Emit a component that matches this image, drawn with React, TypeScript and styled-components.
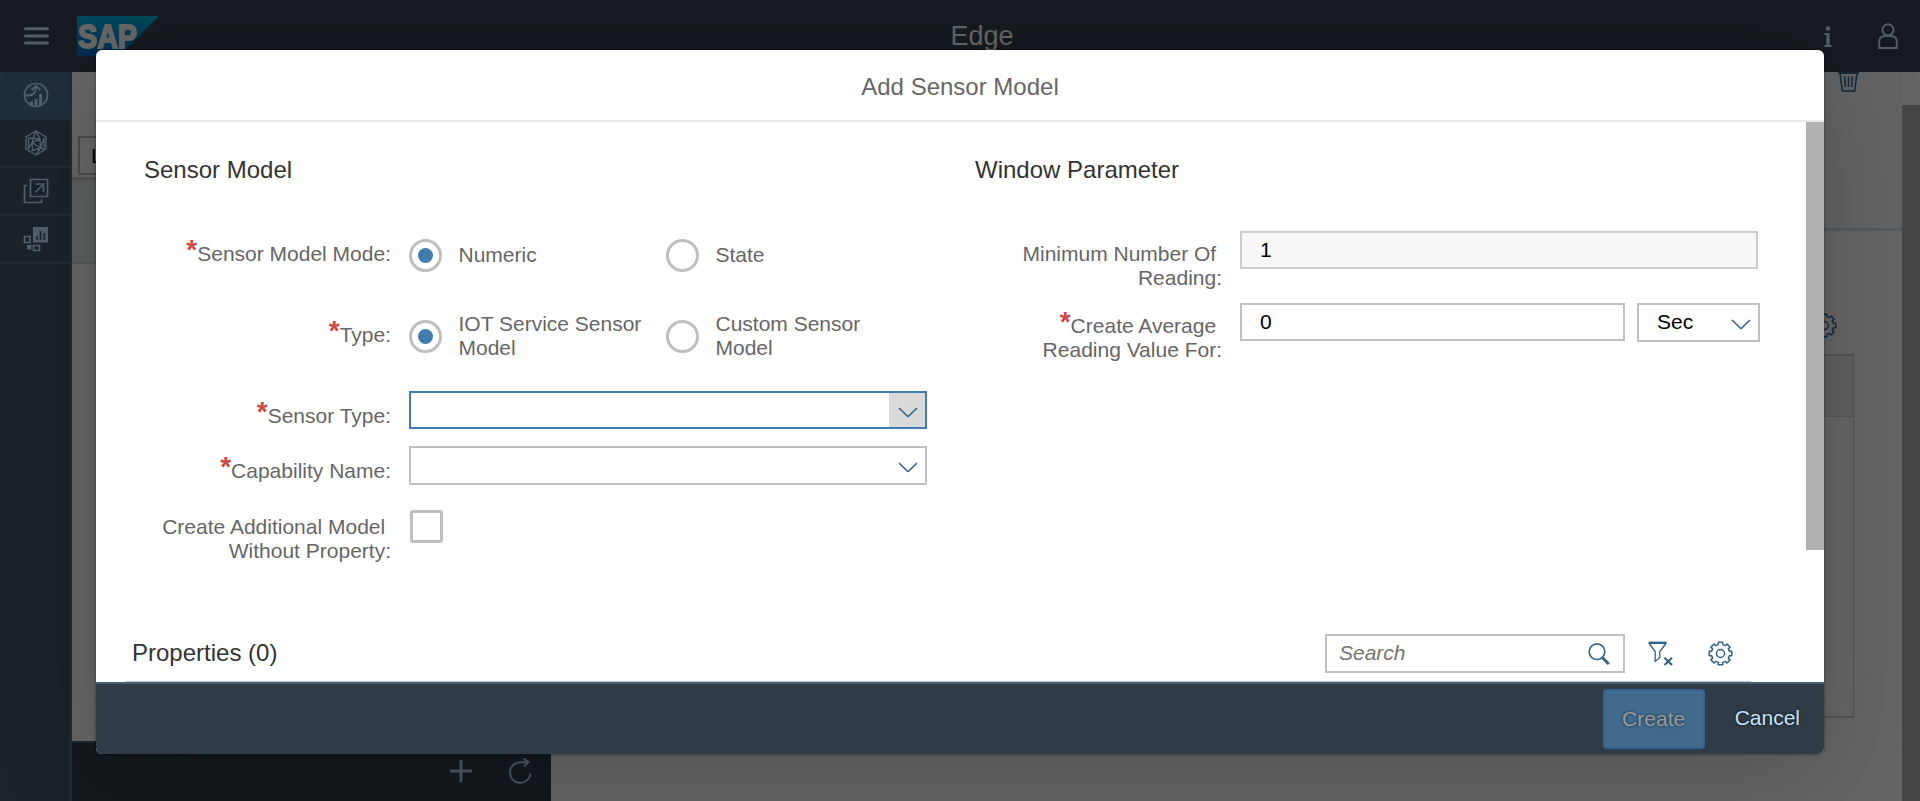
import React from 'react';
import styled, { createGlobalStyle, css } from 'styled-components';

const Global = createGlobalStyle`
  * { box-sizing: border-box; }
  html, body { margin: 0; overflow: hidden; }
  body { font-family: "Liberation Sans", Arial, Helvetica, sans-serif; font-size: 21px; line-height: 24px; color: #666; }
`;

const Page = styled.div`
  position: relative;
  display: flex;
  flex-direction: column;
  width: 1920px;
  height: 801px;
  overflow: hidden;
  background: #666;
`;
const Shell = styled.header`
  display: flex;
  align-items: center;
  height: 72px;
  flex: none;
  padding: 0 22px 0 24px;
  background: #151b20;
`;
const ShellTitle = styled.div`
  flex: 1;
  padding: 0 14px 1px 0;
  font-size: 27px;
  line-height: 32px;
  text-align: center;
  color: #666;
`;
const ShellStart = styled.div`
  display: flex;
  align-items: center;
  width: 176px;
  svg { flex: none; }
`;
const ShellEnd = styled.div`
  display: flex;
  align-items: center;
  justify-content: flex-end;
  gap: 46px;
  width: 120px;
`;
const Body = styled.div`
  display: flex;
  flex: 1;
  min-height: 0;
`;
const Nav = styled.nav`
  width: 72px;
  background: #1b232b;
  border-right: 2px solid #222c36;
`;
const NavItem = styled.div<{ $active?: boolean }>`
  display: flex;
  align-items: center;
  justify-content: center;
  height: 48px;
  margin-right: ${p => (p.$active ? '-1px' : '0')};
  padding-left: 1px;
  border-bottom: 2px solid #232d37;
  background: ${p => (p.$active ? '#212f3b' : 'transparent')};
`;
const Master = styled.aside`
  display: flex;
  flex-direction: column;
  width: 479px;
`;
const MasterTop = styled.div`
  height: 108px;
  padding: 64px 0 0 6px;
  border-bottom: 3px solid #535353;
`;
const MasterSearch = styled.div`
  width: 460px;
  height: 39px;
  padding: 6px 11px;
  border: 2px solid #4a4a4a;
  color: #000;
`;
const MasterRow = styled.div`
  height: 84px;
  background: #5c6061;
  border-bottom: 2px solid #585858;
`;
const MasterFill = styled.div`
  flex: 1;
`;
const MasterFooter = styled.div`
  display: flex;
  align-items: center;
  justify-content: flex-end;
  gap: 37px;
  height: 60px;
  padding: 0 19px 3px 0;
  background: #14191e;
  border-top: 2px solid #1f272f;
`;
const Detail = styled.main`
  flex: 1;
`;
const DetailHeader = styled.div`
  display: flex;
  justify-content: flex-end;
  height: 159px;
  padding-right: 43px;
  background: #636466;
  border-bottom: 3px solid #535b65;
`;
const DetailTools = styled.div`
  display: flex;
  align-items: flex-end;
  justify-content: flex-end;
  height: 123px;
  padding: 0 65px 16px 0;
`;
const DetailTable = styled.div`
  height: 364px;
  margin: 0 48px 0 40px;
  border: 2px solid #545454;
  border-right-width: 1px;
`;
const DetailTableHead = styled.div`
  height: 61px;
  background: #616161;
  border-bottom: 1px solid #585858;
`;
const PageScroll = styled.div`
  width: 18px;
  padding-top: 33px;
`;
const PageThumb = styled.div`
  height: 100%;
  background: #474747;
`;

const Dialog = styled.section`
  position: absolute;
  left: 96px;
  top: 50px;
  display: flex;
  flex-direction: column;
  width: 1728px;
  height: 704px;
  border-radius: 6px;
  overflow: hidden;
  background: #fff;
`;
const DialogShadow = styled.div`
  position: absolute;
  left: 96px;
  top: 50px;
  width: 1728px;
  height: 704px;
  border-radius: 6px;
  box-shadow: 0 0 3px rgba(0,0,0,.5), 0 22px 110px rgba(0,0,0,.2);
`;
const DialogHeader = styled.div`
  height: 72px;
  flex: none;
  padding: 23px 0 0;
  border-bottom: 2px solid #e8e8e8;
  font-size: 24px;
  line-height: 27px;
  text-align: center;
`;
const DialogBody = styled.div`
  display: flex;
  height: 560px;
`;
const Scrollable = styled.div`
  flex: 1;
  display: flex;
  flex-direction: column;
`;
const ScrollThumb = styled.div`
  width: 18px;
  height: 428px;
  background: #b1b1b1;
`;
const Form = styled.div`
  display: flex;
  height: 498px;
`;
const Column = styled.div<{ $w: number }>`
  width: ${p => p.$w}px;
  padding-left: 48px;
`;
const SectionTitle = styled.h2`
  height: 109px;
  margin: 0;
  padding-top: 34px;
  font-size: 24px;
  font-weight: 400;
  line-height: 28px;
  color: #333;
`;
const Row = styled.div<{ $h: number }>`
  display: flex;
  height: ${p => p.$h}px;
`;
const Label = styled.div<{ $top: number }>`
  width: 248px;
  flex: none;
  padding: ${p => p.$top}px 1px 0 0;
  text-align: right;
`;
const Star = styled.span`
  position: relative;
  top: -2px;
  font-size: 28px;
  font-weight: 700;
  line-height: 0;
  color: #c94b4b;
`;
const fieldBox = css`
  display: flex;
  flex: none;
  border: 2px solid #bfbfbf;
`;
const Field = styled.div<{ $w: number; $h?: number; $focus?: boolean; $readonly?: boolean }>`
  ${fieldBox}
  width: ${p => p.$w}px;
  height: ${p => p.$h || 38}px;
  margin-left: 17px;
  border-color: ${p => (p.$focus ? '#427cac' : p.$readonly ? '#ccc' : '#bfbfbf')};
  background: ${p => (p.$readonly ? '#f7f7f7' : '#fff')};
  padding-left: 18px;
  line-height: 34px;
  color: #000;
  justify-content: space-between;
`;
const UnitSelect = styled.div`
  ${fieldBox}
  width: 123px;
  height: 39px;
  margin-left: 12px;
  padding-left: 18px;
  justify-content: space-between;
  line-height: 34px;
  color: #000;
`;
const Arrow = styled.div<{ $pressed?: boolean }>`
  display: flex;
  align-items: center;
  justify-content: center;
  width: 36px;
  padding: 4px 0 0 2px;
  background: ${p => (p.$pressed ? '#d9d9d9' : 'transparent')};
`;
const RadioWrap = styled.div`
  display: flex;
  align-items: center;
  height: 48px;
  width: 240px;
  margin-left: 17px;
`;
const RadioDot = styled.div<{ $on?: boolean }>`
  display: flex;
  align-items: center;
  justify-content: center;
  flex: none;
  width: 33px;
  height: 33px;
  margin: 1px 16.5px 0 0;
  border: 3px solid #bfbfbf;
  border-radius: 50%;
  &::after {
    content: '';
    width: 15px;
    height: 15px;
    border-radius: 50%;
    background: ${p => (p.$on ? '#427cac' : 'transparent')};
  }
`;
const Check = styled.div`
  width: 33px;
  height: 33px;
  margin: -2px 0 0 18px;
  border: 3px solid #bfbfbf;
  border-radius: 3px;
`;
const TableBar = styled.div`
  display: flex;
  align-items: center;
  height: 62px;
  margin: 0 55px 0 30px;
  padding: 0 18px 0 6px;
  border-bottom: 1px solid #c2c6ca;
`;
const TableTitle = styled.div`
  flex: 1;
  padding-top: 4px;
  font-size: 24px;
  line-height: 28px;
  color: #333;
`;
const SearchBox = styled.div`
  ${fieldBox}
  align-items: center;
  justify-content: space-between;
  width: 300px;
  height: 39px;
  margin: 6px 23px 0 0;
  padding: 0 13px 2px 12px;
  font-style: italic;
  color: #757575;
  svg { margin-top: 3px; }
`;
const BarIcon = styled.div<{ $gap?: number }>`
  display: flex;
  padding-top: 5px;
  margin-left: ${p => p.$gap || 0}px;
`;
const DialogFooter = styled.div`
  display: flex;
  justify-content: flex-end;
  height: 72px;
  padding: 5px 24px 0 0;
  border-top: 2px solid #475e75;
  background: #2f3c48;
  text-shadow: 0 0 3px #111;
`;
const CreateButton = styled.div`
  width: 102px;
  height: 60px;
  padding-top: 16px;
  border: 2px solid #376390;
  border-radius: 4px;
  background: #416a8d;
  text-align: center;
  color: #979b9e;
  text-shadow: 0 0 3px rgba(0,0,0,.6);
`;
const CancelButton = styled.div`
  padding: 17px 0 0 30px;
  color: #c9e2fa;
`;

const Chevron = () => (
  <svg width="20" height="11" viewBox="0 0 20 11" fill="none" stroke="#346187" strokeWidth="1.6">
    <path d="M1 1 L9.2 9 Q10 9.7 10.8 9 L19 1" />
  </svg>
);

const Gear = ({ color }: { color: string }) => {
  const pts: string[] = [];
  for (let i = 0; i < 8; i++) {
    const a = (i * Math.PI) / 4;
    [[-0.25, 9.1], [-0.2, 11.5], [0.2, 11.5], [0.25, 9.1]].forEach(([d, r]) => {
      pts.push(`${(12.5 + r * Math.sin(a + d)).toFixed(2)} ${(12.5 - r * Math.cos(a + d)).toFixed(2)}`);
    });
  }
  return (
    <svg width="25" height="25" viewBox="0 0 25 25" fill="none" stroke={color} strokeWidth="1.5" strokeLinejoin="round">
      <path d={`M${pts.join(' L')} Z`} />
      <circle cx="12.5" cy="12.5" r="4" />
    </svg>
  );
};

const Menu = () => (
  <svg width="25" height="18" viewBox="0 0 25 18" stroke="#535d66" strokeWidth="3" strokeLinecap="round">
    <path d="M1.5 1.8H23.5M1.5 9H23.5M1.5 16H23.5" />
  </svg>
);

const SapText = styled.text`
  font: 700 34px "Liberation Sans", Arial, sans-serif;
`;
const LogoSvg = styled.svg`
  margin: 0 0 0 28px;
`;
const Logo = () => (
  <LogoSvg width="82" height="40" viewBox="0 0 82 40">
    <defs>
      <linearGradient id="sap" x1="0" y1="0" x2="0" y2="1">
        <stop offset="0" stopColor="#00495c" />
        <stop offset="1" stopColor="#002b50" />
      </linearGradient>
    </defs>
    <path d="M0 0H82L42 40H0Z" fill="url(#sap)" />
    <SapText x="1" y="31.5" textLength="59" lengthAdjust="spacingAndGlyphs" fill="#666" stroke="#666" strokeWidth="2">SAP</SapText>
  </LogoSvg>
);

const navStroke = { fill: 'none', stroke: '#53616d', strokeWidth: 1.7 } as const;

const Performance = () => (
  <svg width="26" height="26" viewBox="0 0 26 26" {...navStroke}>
    <circle cx="13" cy="13" r="11.5" />
    <path d="M2 13.5H6Q13 13 13 4M8.7 8 L13 4 L17.3 8" strokeWidth="2" />
    <path d="M8.5 19.5V23M13 17V24.5M17.6 12V23.5" strokeWidth="3" />
  </svg>
);
const Network = () => (
  <svg width="24" height="26" viewBox="0 0 24 26" {...navStroke} strokeWidth="1.4">
    <path d="M12 1L22 7V19L12 25L2 19V7Z" />
    <path d="M12 1L8 12.5L16.5 18L20 8M12 1L16 9L4.5 8M4.5 8V19L8 12.5L16 9L16.5 18L20 19V8M16.5 18L12 25M8 12.5L8.5 20.5L16.5 18" />
  </svg>
);
const External = () => (
  <svg width="26" height="26" viewBox="0 0 26 26" {...navStroke}>
    <path d="M7.5 1.5H24.5V18.5H7.5Z" />
    <path d="M4 7.5H1.5V24.5H18.5V21.5M12 14.5L20 6.5M12.5 6H20.5V14" />
  </svg>
);
const Widgets = () => (
  <svg width="26" height="26" viewBox="0 0 26 26" {...navStroke}>
    <rect x="10" y="1" width="15" height="15.5" fill="#53616d" stroke="none" />
    <path d="M14 10V14M17.5 5V14M21.3 7V14" stroke="#1b232b" />
    <path d="M1.5 10.5H7V16.5H1.5ZM10.5 19.5H16.5V24.5H10.5Z" />
    <rect x="4" y="19" width="4.5" height="4.5" fill="#53616d" stroke="none" />
  </svg>
);
const Info = () => (
  <svg width="8" height="21" viewBox="0 0 8 21" fill="#535d66">
    <circle cx="4" cy="2.6" r="2.4" />
    <path d="M.5 7H5.7V19H7.5V21H.3V19H2.3V9H.5Z" />
  </svg>
);
const Person = () => (
  <svg width="20" height="26" viewBox="0 0 20 26" fill="none" stroke="#535d66" strokeWidth="2">
    <circle cx="10" cy="6.8" r="5.6" />
    <path d="M1.2 25V18.5Q1.5 13 7 13H13Q18.5 13 18.8 18.5V25Z" />
  </svg>
);
const Trash = () => (
  <svg width="21" height="21" viewBox="0 0 21 21" fill="none" stroke="#152a3b" strokeWidth="1.6">
    <path d="M0 1H21" strokeWidth="2" />
    <path d="M2 1L4.3 19H16.7L19 1M6.7 4.5L7.3 15M10.5 4.5V15M14.3 4.5L13.7 15" />
  </svg>
);
const Plus = () => (
  <svg width="22" height="22" viewBox="0 0 22 22" stroke="#4b5761" strokeWidth="3">
    <path d="M0 11H22M11 0V22" />
  </svg>
);
const Refresh = () => (
  <svg width="23" height="26" viewBox="0 0 23 26" fill="none" stroke="#4b5761" strokeWidth="1.9">
    <path d="M21.5 15.5A10.3 10.3 0 1 1 11.5 4.2H19.5M14.5 .5L19.5 4.2L15 8.5" />
  </svg>
);
const Magnifier = () => (
  <svg width="22" height="22" viewBox="0 0 22 22" fill="none" stroke="#346187">
    <circle cx="9" cy="8.7" r="7.8" strokeWidth="1.6" />
    <path d="M14 14.2L20.8 21" strokeWidth="2.8" />
  </svg>
);
const FilterClear = () => (
  <svg width="26" height="25" viewBox="0 0 26 25" fill="none" stroke="#346187">
    <path d="M1.2 2.5L7.2 10.5V20.4L11.8 16.5V10.5L18 2.5" strokeWidth="1.3" />
    <path d="M.6 1.8H18.6" strokeWidth="2.4" />
    <path d="M16.5 16.8L24 24M24 16.8L16.5 24" strokeWidth="2.1" />
  </svg>
);

const Required = () => <Star>*</Star>;
const Radio = ({ on, children }: { on?: boolean; children: React.ReactNode }) => (
  <RadioWrap>
    <RadioDot $on={on} />
    <span>{children}</span>
  </RadioWrap>
);

export default function App() {
  return (
    <Page>
      <Global />
      <Shell>
        <ShellStart><Menu /><Logo /></ShellStart>
        <ShellTitle>Edge</ShellTitle>
        <ShellEnd><Info /><Person /></ShellEnd>
      </Shell>
      <Body>
        <Nav>
          <NavItem $active><Performance /></NavItem>
          <NavItem><Network /></NavItem>
          <NavItem><External /></NavItem>
          <NavItem><Widgets /></NavItem>
        </Nav>
        <Master>
          <MasterTop><MasterSearch>L</MasterSearch></MasterTop>
          <MasterRow />
          <MasterFill />
          <MasterFooter><Plus /><Refresh /></MasterFooter>
        </Master>
        <Detail>
          <DetailHeader><Trash /></DetailHeader>
          <DetailTools><Gear color="#152a3b" /></DetailTools>
          <DetailTable><DetailTableHead /></DetailTable>
        </Detail>
        <PageScroll><PageThumb /></PageScroll>
      </Body>

      <DialogShadow />
      <Dialog>
        <DialogHeader>Add Sensor Model</DialogHeader>
        <DialogBody>
          <Scrollable>
            <Form>
              <Column $w={831}>
                <SectionTitle>Sensor Model</SectionTitle>
                <Row $h={81}>
                  <Label $top={11}><Required />Sensor Model Mode:</Label>
                  <Radio on>Numeric</Radio>
                  <Radio>State</Radio>
                </Row>
                <Row $h={79}>
                  <Label $top={11}><Required />Type:</Label>
                  <Radio on>IOT Service Sensor Model</Radio>
                  <Radio>Custom Sensor Model</Radio>
                </Row>
                <Row $h={55}>
                  <Label $top={13}><Required />Sensor Type:</Label>
                  <Field $w={518} $focus><span /><Arrow $pressed><Chevron /></Arrow></Field>
                </Row>
                <Row $h={66}>
                  <Label $top={13}><Required />Capability Name:</Label>
                  <Field $w={518} $h={39}><span /><Arrow><Chevron /></Arrow></Field>
                </Row>
                <Row $h={60}>
                  <Label $top={3}>Create Additional Model&nbsp;<br />Without Property:</Label>
                  <Check />
                </Row>
              </Column>
              <Column $w={832}>
                <SectionTitle>Window Parameter</SectionTitle>
                <Row $h={72}>
                  <Label $top={11}>Minimum Number Of&nbsp;<br />Reading:</Label>
                  <Field $w={518} $readonly>1</Field>
                </Row>
                <Row $h={72}>
                  <Label $top={11}><Required />Create Average&nbsp;<br />Reading Value For:</Label>
                  <Field $w={385}>0</Field>
                  <UnitSelect>Sec<Arrow><Chevron /></Arrow></UnitSelect>
                </Row>
              </Column>
            </Form>
            <TableBar>
              <TableTitle>Properties (0)</TableTitle>
              <SearchBox>Search<Magnifier /></SearchBox>
              <BarIcon><FilterClear /></BarIcon>
              <BarIcon $gap={34}><Gear color="#346187" /></BarIcon>
            </TableBar>
          </Scrollable>
          <ScrollThumb />
        </DialogBody>
        <DialogFooter>
          <CreateButton>Create</CreateButton>
          <CancelButton>Cancel</CancelButton>
        </DialogFooter>
      </Dialog>
    </Page>
  );
}
